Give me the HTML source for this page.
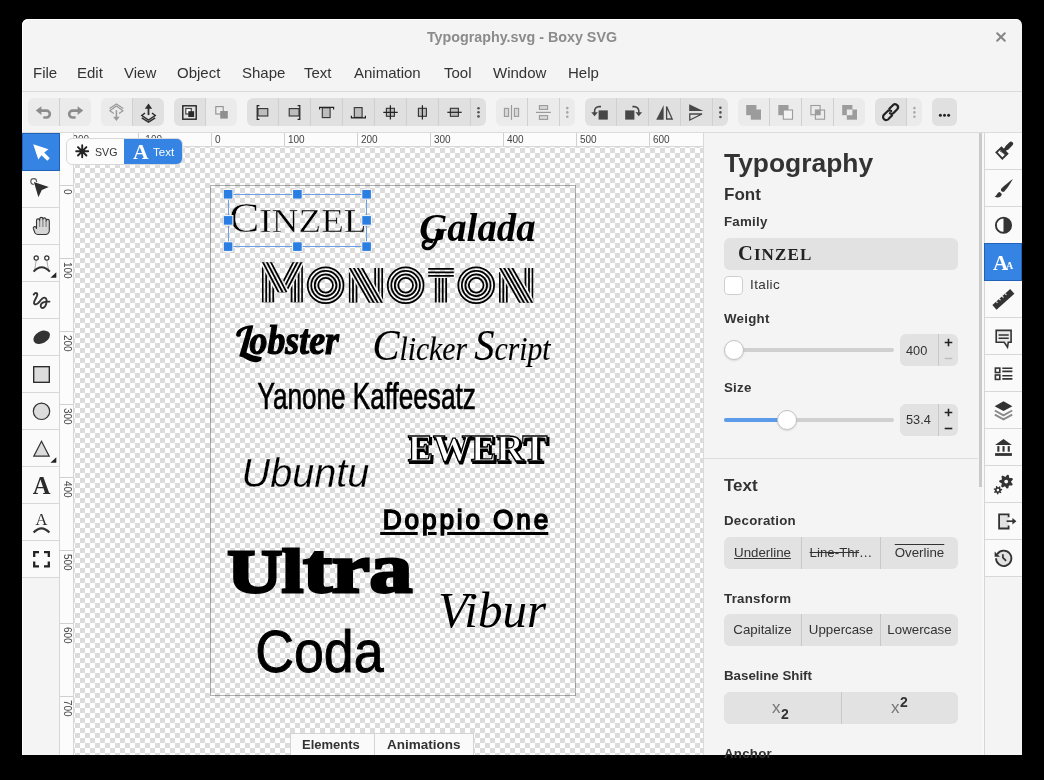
<!DOCTYPE html>
<html><head><meta charset="utf-8">
<style>
*{box-sizing:border-box}
html,body{margin:0;padding:0}
body{width:1044px;height:780px;background:#000;overflow:hidden;position:relative;font-family:"Liberation Sans",sans-serif;color:#333}
.a{position:absolute}
#win{left:22px;top:19px;width:1000px;height:736px;background:#f4f4f4;border-radius:6px 6px 0 0;overflow:hidden;box-shadow:inset 1px 1px 0 #fff}
.menu{top:63px;font-size:15px;color:#333;line-height:20px}
.grp{top:98px;height:28px;background:#ebebeb;border-radius:6px;overflow:hidden}
.btn{position:absolute;top:0;height:28px;border-right:1px solid #d4d4d4}
.btn svg{position:absolute;left:50%;top:50%;transform:translate(-50%,-50%)}
.pressed{background:#dedede}
.tool{left:22px;width:38px;height:37px;background:#fafafa;border-bottom:1px solid #d6d6d6;border-right:1px solid #d4d4d4}
.tool svg,.side svg{position:absolute;left:50%;top:50%;transform:translate(-50%,-50%)}
.side{left:984px;width:38px;height:37px;background:#fafafa;border-bottom:1px solid #d6d6d6;border-left:1px solid #d4d4d4}
.rl{font-size:10px;color:#444;line-height:10px}
.lbl{left:724px;font-weight:bold;font-size:13.3px;color:#333;line-height:16px;letter-spacing:.25px}
.seg{position:absolute;height:32px;background:#e2e2e2;border-radius:6px;overflow:hidden;left:724px;width:234px}
.seg div{position:absolute;top:0;height:32px;line-height:32px;text-align:center;font-size:13.3px;color:#333;border-right:1px solid #c8c8c8}
</style></head><body><div id="root" style="position:absolute;left:0;top:0;width:1044px;height:780px;will-change:transform">
<div id="win" class="a"></div>
<!-- title -->
<div class="a" style="left:22px;top:28px;width:1000px;text-align:center;font-weight:bold;font-size:14.3px;color:#8b8b8b;line-height:18px">Typography.svg - Boxy SVG</div>
<svg class="a" style="left:995px;top:31px" width="12" height="12" viewBox="0 0 12 12"><path d="M2.2 2.2L9.8 9.8M9.8 2.2L2.2 9.8" stroke="#858585" stroke-width="2" stroke-linecap="round"/></svg>
<!-- menu -->
<div class="a menu" style="left:33px">File</div>
<div class="a menu" style="left:77px">Edit</div>
<div class="a menu" style="left:124px">View</div>
<div class="a menu" style="left:177px">Object</div>
<div class="a menu" style="left:242px">Shape</div>
<div class="a menu" style="left:304px">Text</div>
<div class="a menu" style="left:354px">Animation</div>
<div class="a menu" style="left:444px">Tool</div>
<div class="a menu" style="left:493px">Window</div>
<div class="a menu" style="left:568px">Help</div>
<div class="a" style="left:22px;top:91px;width:1000px;height:1px;background:#dadada"></div>

<!-- TOOLBAR -->
<!-- group backgrounds -->
<div class="a" style="left:28px;top:98px;width:63px;height:28px;border-radius:6px;background:#ebebeb"></div>
<div class="a" style="left:101px;top:98px;width:63px;height:28px;border-radius:6px;background:linear-gradient(90deg,#ebebeb 31px,#e0e0e0 31px)"></div>
<div class="a" style="left:174px;top:98px;width:63px;height:28px;border-radius:6px;background:linear-gradient(90deg,#e0e0e0 31px,#ebebeb 31px)"></div>
<div class="a" style="left:247px;top:98px;width:239px;height:28px;border-radius:6px;background:#e0e0e0"></div>
<div class="a" style="left:496px;top:98px;width:79px;height:28px;border-radius:6px;background:#ebebeb"></div>
<div class="a" style="left:585px;top:98px;width:143px;height:28px;border-radius:6px;background:#e0e0e0"></div>
<div class="a" style="left:738px;top:98px;width:127px;height:28px;border-radius:6px;background:#ebebeb"></div>
<div class="a" style="left:875px;top:98px;width:47px;height:28px;border-radius:6px;background:linear-gradient(90deg,#e0e0e0 32px,#ebebeb 32px)"></div>
<div class="a" style="left:932px;top:98px;width:25px;height:28px;border-radius:6px;background:#e0e0e0"></div>
<!-- dividers -->
<svg class="a" style="left:0;top:0" width="1044" height="140">
<g fill="#d0d0d0">
<rect x="59" y="98" width="1" height="28"/>
<rect x="132" y="98" width="1" height="28"/>
<rect x="205" y="98" width="1" height="28"/>
<rect x="278" y="98" width="1" height="28"/><rect x="310" y="98" width="1" height="28"/><rect x="342" y="98" width="1" height="28"/><rect x="374" y="98" width="1" height="28"/><rect x="406" y="98" width="1" height="28"/><rect x="438" y="98" width="1" height="28"/><rect x="470" y="98" width="1" height="28"/>
<rect x="527" y="98" width="1" height="28"/><rect x="559" y="98" width="1" height="28"/>
<rect x="616" y="98" width="1" height="28"/><rect x="648" y="98" width="1" height="28"/><rect x="680" y="98" width="1" height="28"/><rect x="712" y="98" width="1" height="28"/>
<rect x="769" y="98" width="1" height="28"/><rect x="801" y="98" width="1" height="28"/><rect x="833" y="98" width="1" height="28"/>
<rect x="906" y="98" width="1" height="28"/>
</g>
<!-- undo/redo -->
<g fill="none" stroke="#8c8c8c" stroke-width="2.6" stroke-linecap="round">
<path d="M41 110.6H46.4A3.45 3.45 0 0 1 46.4 117.5H44.4"/>
<path d="M78 110.6H72.6A3.45 3.45 0 0 0 72.6 117.5H74.6"/>
</g>
<g fill="#8c8c8c"><path d="M35.8 110.6L41.4 106.2V115Z"/><path d="M83.2 110.6L77.6 106.2V115Z"/></g>
<!-- group2 icon1: grey chevrons + down arrow -->
<g fill="none" stroke="#9a9a9a" stroke-width="1.25" stroke-linejoin="round">
<path d="M109.6 108.6L116.4 103.9L123.2 108.6"/>
<path d="M113.8 113.5L109.8 110.8L116.4 106.1L123 110.8L119 113.5"/>
</g>
<path d="M116.4 110.2V117.5" stroke="#9a9a9a" stroke-width="1.5"/>
<path d="M113.1 116.8H119.7L116.4 121.1Z" fill="#9a9a9a"/>
<!-- group2 icon2: up arrow + stack -->
<g fill="none" stroke="#2e2e2e" stroke-width="1.5">
<path d="M145 113L141.8 115.5L148.5 120.2L155.2 115.5L152 113"/>
<path d="M141.8 117.8L148.5 122.2L155.2 117.8"/>
</g>
<path d="M148.5 107.5V115" stroke="#2e2e2e" stroke-width="1.8"/>
<path d="M144.8 108.8L148.5 103.6L152.2 108.8Z" fill="#2e2e2e"/>
<!-- group3 icon1 -->
<rect x="182.8" y="105.8" width="13.4" height="13.4" fill="none" stroke="#222" stroke-width="1.4"/>
<rect x="185.8" y="108.5" width="5.5" height="5.5" fill="#fff" stroke="#444" stroke-width="1.2"/>
<rect x="188.3" y="111.2" width="5.8" height="5.8" fill="#2a2a2a"/>
<!-- group3 icon2 -->
<rect x="215.8" y="106.6" width="7.4" height="7.4" fill="#ededed" stroke="#8f8f8f" stroke-width="1.1"/>
<rect x="220.2" y="111" width="7.6" height="7.6" fill="#8f8f8f"/>
<!-- align icons -->
<g fill="#bdbdbd" stroke="#333" stroke-width="1.1">
<rect x="258" y="108.6" width="9.8" height="7.4"/>
<rect x="289.2" y="108.6" width="9.8" height="7.4"/>
<rect x="322.3" y="107.8" width="7.8" height="9.8"/>
<rect x="354.3" y="107.6" width="7.8" height="9.8"/>
<rect x="386.4" y="108.3" width="8" height="8"/>
<rect x="418.4" y="108.3" width="8" height="8"/>
<rect x="450.4" y="108.3" width="8" height="8"/>
</g>
<g fill="none" stroke="#222" stroke-width="1.2">
<path d="M259.4 105.6H257.2V119.4H259.4"/>
<path d="M297.6 105.6H299.8V119.4H297.6"/>
<path d="M319.6 109.4V107.3H333.6V109.4"/>
<path d="M351.4 115.8V117.9H365.4V115.8"/>
<path d="M383.3 112.3H397.7M390.4 105.3V119.5"/>
<path d="M422.4 105.3V119.5"/>
<path d="M447.3 112.3H461.7"/>
</g>
<g fill="#555"><circle cx="478.5" cy="108.2" r="1.3"/><circle cx="478.5" cy="112.3" r="1.3"/><circle cx="478.5" cy="116.4" r="1.3"/></g>
<!-- distribute -->
<g fill="#d8d8d8" stroke="#9a9a9a" stroke-width="1.1">
<rect x="504.4" y="108.4" width="4.2" height="8"/>
<rect x="514.4" y="108.4" width="4.2" height="8"/>
<rect x="539.4" y="105.6" width="8.2" height="3.8"/>
<rect x="539.4" y="115.6" width="8.2" height="3.8"/>
</g>
<g stroke="#9a9a9a" stroke-width="1.2"><path d="M511.5 105V119.8"/><path d="M536 112.4H550.8"/></g>
<g fill="#a6a6a6"><circle cx="567.3" cy="108.1" r="1.3"/><circle cx="567.3" cy="112.4" r="1.3"/><circle cx="567.3" cy="116.7" r="1.3"/></g>
<!-- rotate / flip -->
<g fill="#474747">
<rect x="598.6" y="110.4" width="9.2" height="9.2"/>
<rect x="625.2" y="110.4" width="9.2" height="9.2"/>
<path d="M591.3 112.3H597.9L594.6 116.2Z"/>
<path d="M635.5 112.3H642.1L638.8 116.2Z"/>
<path d="M663.6 105.3V119.7H656.2Z"/>
<path d="M689.2 104.3L703.3 110.9H689.2Z"/>
</g>
<g fill="none" stroke="#474747" stroke-width="1.6">
<path d="M601 106.6H599A4.4 4.4 0 0 0 594.6 111V113"/>
<path d="M632.4 106.6H634.4A4.4 4.4 0 0 1 638.8 111V113"/>
<path d="M666.6 106.5V119H672.2Z" stroke-width="1.3" stroke-linejoin="miter"/>
<path d="M689.8 114V120L702 114Z" stroke-width="1.3"/>
</g>
<g fill="#505050"><circle cx="720.4" cy="107.8" r="1.3"/><circle cx="720.4" cy="112.4" r="1.3"/><circle cx="720.4" cy="117" r="1.3"/></g>
<!-- boolean -->
<g fill="#9c9c9c">
<rect x="746.2" y="105" width="10.2" height="10.2"/><rect x="750.8" y="109.5" width="10.2" height="10.2"/>
<rect x="778.3" y="105" width="10.2" height="10.2"/>
<rect x="842.2" y="105" width="10.2" height="10.2"/><rect x="846.8" y="109.5" width="10.2" height="10.2"/>
</g>
<rect x="783.3" y="110" width="9.2" height="9.2" fill="#f4f4f4" stroke="#9c9c9c" stroke-width="1.1"/>
<g fill="none" stroke="#9c9c9c" stroke-width="1.1">
<rect x="810.9" y="105.5" width="9.2" height="9.2"/><rect x="815.4" y="110" width="9.2" height="9.2"/>
</g>
<rect x="815.4" y="110" width="4.7" height="4.7" fill="#9c9c9c"/>
<rect x="846.8" y="109.5" width="5.6" height="5.7" fill="#ebebeb"/>
<!-- link -->
<g fill="none" stroke="#222" stroke-width="2.2" stroke-linecap="round">
<path d="M889.3 108.8L892.6 105.5A2.6 2.6 0 0 1 897.4 109.1L893.6 112.9A2.6 2.6 0 0 1 889.9 113.2"/>
<path d="M892 115.5L888.7 118.8A2.6 2.6 0 0 1 883.7 115L887.5 111.2A2.6 2.6 0 0 1 891.2 111"/>
</g>
<g fill="#aaa"><circle cx="914.4" cy="108.1" r="1.3"/><circle cx="914.4" cy="112.4" r="1.3"/><circle cx="914.4" cy="116.7" r="1.3"/></g>
<g fill="#222"><circle cx="940.4" cy="115.3" r="1.5"/><circle cx="944.5" cy="115.3" r="1.5"/><circle cx="948.6" cy="115.3" r="1.5"/></g>
</svg>


<!-- top line above rulers -->
<div class="a" style="left:22px;top:132px;width:1000px;height:1px;background:#dcdcdc"></div>

<!-- CANVAS -->
<div class="a" style="left:74px;top:147px;width:630px;height:608px;background-color:#fff;background-image:linear-gradient(45deg,#dcdcdc 25%,transparent 25%,transparent 75%,#dcdcdc 75%),linear-gradient(45deg,#dcdcdc 25%,transparent 25%,transparent 75%,#dcdcdc 75%);background-size:10px 10px;background-position:6px 6px,11px 11px"></div>

<!-- RULERS -->
<div class="a" style="left:60px;top:133px;width:643px;height:13px;background:#fcfcfc"></div>
<div class="a" style="left:60px;top:146px;width:643px;height:1px;background:#d8d8d8"></div>
<div class="a" style="left:60px;top:133px;width:13px;height:622px;background:#fcfcfc"></div>
<div class="a" style="left:73px;top:133px;width:1px;height:622px;background:#d8d8d8"></div>
<div class="a" style="left:703px;top:133px;width:1px;height:622px;background:#dadada"></div>
<svg class="a" style="left:0;top:0" width="1044" height="780"><g fill="#d0d0d0">
<rect x="138" y="133" width="1" height="13"/>
<rect x="211" y="133" width="1" height="13"/>
<rect x="284" y="133" width="1" height="13"/>
<rect x="357" y="133" width="1" height="13"/>
<rect x="430" y="133" width="1" height="13"/>
<rect x="503" y="133" width="1" height="13"/>
<rect x="576" y="133" width="1" height="13"/>
<rect x="649" y="133" width="1" height="13"/>
<rect x="60" y="185" width="13" height="1"/>
<rect x="60" y="258" width="13" height="1"/>
<rect x="60" y="331" width="13" height="1"/>
<rect x="60" y="404" width="13" height="1"/>
<rect x="60" y="477" width="13" height="1"/>
<rect x="60" y="550" width="13" height="1"/>
<rect x="60" y="623" width="13" height="1"/>
<rect x="60" y="696" width="13" height="1"/>
</g></svg>
<div class="a" style="left:74px;top:133px;width:629px;height:13px;overflow:hidden">
<div class="a rl" style="left:-5px;top:2px">-200</div>
<div class="a rl" style="left:68px;top:2px">-100</div>
<div class="a rl" style="left:141px;top:2px">0</div>
<div class="a rl" style="left:214px;top:2px">100</div>
<div class="a rl" style="left:287px;top:2px">200</div>
<div class="a rl" style="left:360px;top:2px">300</div>
<div class="a rl" style="left:433px;top:2px">400</div>
<div class="a rl" style="left:506px;top:2px">500</div>
<div class="a rl" style="left:579px;top:2px">600</div>
</div>
<div class="a" style="left:60px;top:147px;width:13px;height:608px;overflow:hidden">
<div class="a rl" style="left:12px;top:42px;transform-origin:0 0;transform:rotate(90deg)">0</div>
<div class="a rl" style="left:12px;top:115px;transform-origin:0 0;transform:rotate(90deg)">100</div>
<div class="a rl" style="left:12px;top:188px;transform-origin:0 0;transform:rotate(90deg)">200</div>
<div class="a rl" style="left:12px;top:261px;transform-origin:0 0;transform:rotate(90deg)">300</div>
<div class="a rl" style="left:12px;top:334px;transform-origin:0 0;transform:rotate(90deg)">400</div>
<div class="a rl" style="left:12px;top:407px;transform-origin:0 0;transform:rotate(90deg)">500</div>
<div class="a rl" style="left:12px;top:480px;transform-origin:0 0;transform:rotate(90deg)">600</div>
<div class="a rl" style="left:12px;top:553px;transform-origin:0 0;transform:rotate(90deg)">700</div>
</div>

<!-- LEFT TOOLS -->
<div class="a" style="left:22px;top:133px;width:37px;height:444px;background:#fafafa"></div>
<div class="a" style="left:59px;top:133px;width:1px;height:622px;background:#d6d6d6"></div>
<svg class="a" style="left:0;top:0" width="1044" height="780">
<g fill="#d8d8d8">
<rect x="22" y="207" width="37" height="1"/><rect x="22" y="244" width="37" height="1"/><rect x="22" y="281" width="37" height="1"/><rect x="22" y="318" width="37" height="1"/><rect x="22" y="355" width="37" height="1"/><rect x="22" y="392" width="37" height="1"/><rect x="22" y="429" width="37" height="1"/><rect x="22" y="466" width="37" height="1"/><rect x="22" y="503" width="37" height="1"/><rect x="22" y="540" width="37" height="1"/><rect x="22" y="577" width="37" height="1"/>
</g>
<rect x="22.5" y="133.5" width="37" height="37" fill="#3584e4" stroke="#1f62b8" stroke-width="1"/>
<path d="M33.2 144.2L48.5 149.3L44.2 152.5L49.8 158.3L47.3 160.8L41.5 155.2L38.3 159.5Z" fill="#fff"/>
<!-- node -->
<circle cx="33.7" cy="181.5" r="2.9" fill="none" stroke="#5a5a5a" stroke-width="1.15"/>
<path d="M33.9 182L48.8 186.9L41.8 190L38.4 197.3Z" fill="#2e2e2e" stroke="#fafafa" stroke-width="1.6" paint-order="stroke"/>
<!-- hand -->
<path d="M36.5 224.5V220.5A1.6 1.6 0 0 1 39.7 220.5V219A1.6 1.6 0 0 1 42.9 219V219.5A1.6 1.6 0 0 1 46.1 219.5V221A1.6 1.6 0 0 1 49.3 221V230.5A4 4 0 0 1 45.3 234.5H38A4 4 0 0 1 35 233L33.3 228.5A1.5 1.5 0 0 1 36 227.3L36.5 228.5Z" fill="#d6d6d6" stroke="#333" stroke-width="1.1" stroke-linejoin="round"/>
<path d="M39.7 221V227M42.9 220V227M46.1 221V227" stroke="#666" stroke-width="0.9"/>
<!-- bezier -->
<g fill="none" stroke="#333">
<path d="M36.2 260.2L34.6 270.5M46.8 260.2L48.6 270.5" stroke-width="0.7" stroke="#888"/>
<circle cx="36.2" cy="258" r="2.1" stroke-width="1.2" fill="#fff"/>
<circle cx="46.8" cy="258" r="2.1" stroke-width="1.2" fill="#fff"/>
<path d="M33.6 271.6Q41.6 263 49.8 271.6" stroke-width="2.1"/>
<path d="M33.6 532.6Q41.5 524 49.4 532.6" stroke-width="2.2"/>
</g>
<path d="M56.3 272.3V277.8H50.4Z" fill="#222"/>
<path d="M56.3 457.2V462.8H50.4Z" fill="#222"/>
<!-- freehand -->
<path d="M33.7 294.6C34.5 292.6 37.2 292.2 37.3 294.6C37.4 296.8 33.6 300.6 34 303C34.4 305.2 37 304.8 39.5 301.6C41.5 299 43 297.4 44.6 297.6C47 297.9 47 301.5 46 304.5C45 307.5 43 308.6 41.6 307.8C40 306.8 40.6 303.8 42.6 302.6C44.4 301.6 47 301.6 49.5 301.6" fill="none" stroke="#333" stroke-width="1.9" stroke-linecap="round"/>
<!-- blob -->
<ellipse cx="41.7" cy="337.3" rx="8.9" ry="5.9" transform="rotate(-28 41.7 337.3)" fill="#333"/>
<!-- rect / circle / triangle -->
<rect x="33.7" y="366.7" width="15.6" height="15.6" fill="#dcdcdc" stroke="#222" stroke-width="1.3"/>
<circle cx="41.5" cy="411.3" r="8.2" fill="#dcdcdc" stroke="#333" stroke-width="1.2"/>
<path d="M41.5 441.2L49.2 456.2H33.8Z" fill="#dcdcdc" stroke="#333" stroke-width="1.2" stroke-linejoin="miter"/>
<!-- crop -->
<path d="M34.2 557V552.2H39M44 552.2H48.8V557M48.8 561.6V566.4H44M39 566.4H34.2V561.6" fill="none" stroke="#222" stroke-width="2.3"/>
</svg>
<div class="a" style="left:23px;top:474px;width:37px;text-align:center;font:bold 24.5px 'Liberation Serif',serif;color:#2b2b2b;line-height:24px">A</div>
<div class="a" style="left:23px;top:512px;width:37px;text-align:center;font:16.5px 'Liberation Serif',serif;color:#2b2b2b;line-height:16px">A</div>


<!-- DOCUMENT -->
<svg class="a" style="left:0;top:0" width="1044" height="780">
<defs>
<pattern id="chk" x="5" y="3" width="10" height="10" patternUnits="userSpaceOnUse"><rect width="10" height="10" fill="#fff"/><rect width="5" height="5" fill="#dcdcdc"/><rect x="5" y="5" width="5" height="5" fill="#dcdcdc"/></pattern>
<clipPath id="cM"><rect x="261.9" y="262.2" width="41" height="40.4"/></clipPath>
<clipPath id="cMd"><rect x="255" y="255" width="55" height="37.2"/></clipPath>
<clipPath id="cN0"><rect x="348.7" y="268" width="34.6" height="34.7"/></clipPath>
<clipPath id="cN150"><rect x="499" y="268" width="34.6" height="34.7"/></clipPath>
</defs>
<rect x="210.5" y="185.5" width="365" height="510" fill="none" stroke="rgba(0,0,0,0.3)" stroke-width="1"/>
<g fill="none"><g clip-path="url(#cM)"><path d="M267.95 262.00L267.95 302.60" stroke="#000" stroke-width="12.3"/><path d="M267.95 262.00L267.95 302.60" stroke="url(#chk)" stroke-width="8.8"/><path d="M267.95 262.00L267.95 302.60" stroke="#000" stroke-width="5.3"/><path d="M267.95 262.00L267.95 302.60" stroke="url(#chk)" stroke-width="1.7"/><path d="M296.85 262.00L296.85 302.60" stroke="#000" stroke-width="12.3"/><path d="M296.85 262.00L296.85 302.60" stroke="url(#chk)" stroke-width="8.8"/><path d="M296.85 262.00L296.85 302.60" stroke="#000" stroke-width="5.3"/><path d="M296.85 262.00L296.85 302.60" stroke="url(#chk)" stroke-width="1.7"/><g clip-path="url(#cMd)"><path d="M301.15 255.00L280.80 294.00" stroke="url(#chk)" stroke-width="12.3"/><path d="M301.15 255.00L280.80 294.00" stroke="#000" stroke-width="8.8"/><path d="M301.15 255.00L280.80 294.00" stroke="url(#chk)" stroke-width="5.3"/><path d="M301.15 255.00L280.80 294.00" stroke="#000" stroke-width="1.8"/><path d="M263.15 255.00L283.50 294.00" stroke="url(#chk)" stroke-width="12.3"/><path d="M263.15 255.00L283.50 294.00" stroke="#000" stroke-width="8.8"/><path d="M263.15 255.00L283.50 294.00" stroke="url(#chk)" stroke-width="5.3"/><path d="M263.15 255.00L283.50 294.00" stroke="#000" stroke-width="1.8"/></g></g><g clip-path="url(#cN0)"><path d="M353.00 268.00V302.70" stroke="#000" stroke-width="8.8"/><path d="M353.00 268.00V302.70" stroke="url(#chk)" stroke-width="5.3"/><path d="M353.00 268.00V302.70" stroke="#000" stroke-width="1.8"/><path d="M378.70 268.00V302.70" stroke="#000" stroke-width="8.8"/><path d="M378.70 268.00V302.70" stroke="url(#chk)" stroke-width="5.3"/><path d="M378.70 268.00V302.70" stroke="#000" stroke-width="1.8"/><path d="M352.47 262.00L378.76 308.00" stroke="url(#chk)" stroke-width="15.7"/><path d="M352.47 262.00L378.76 308.00" stroke="#000" stroke-width="12.3"/><path d="M352.47 262.00L378.76 308.00" stroke="url(#chk)" stroke-width="8.8"/><path d="M352.47 262.00L378.76 308.00" stroke="#000" stroke-width="5.3"/><path d="M352.47 262.00L378.76 308.00" stroke="url(#chk)" stroke-width="1.7"/></g><g clip-path="url(#cN150)"><path d="M503.30 268.00V302.70" stroke="#000" stroke-width="8.8"/><path d="M503.30 268.00V302.70" stroke="url(#chk)" stroke-width="5.3"/><path d="M503.30 268.00V302.70" stroke="#000" stroke-width="1.8"/><path d="M529.00 268.00V302.70" stroke="#000" stroke-width="8.8"/><path d="M529.00 268.00V302.70" stroke="url(#chk)" stroke-width="5.3"/><path d="M529.00 268.00V302.70" stroke="#000" stroke-width="1.8"/><path d="M502.77 262.00L529.06 308.00" stroke="url(#chk)" stroke-width="15.7"/><path d="M502.77 262.00L529.06 308.00" stroke="#000" stroke-width="12.3"/><path d="M502.77 262.00L529.06 308.00" stroke="url(#chk)" stroke-width="8.8"/><path d="M502.77 262.00L529.06 308.00" stroke="#000" stroke-width="5.3"/><path d="M502.77 262.00L529.06 308.00" stroke="url(#chk)" stroke-width="1.7"/></g><circle cx="325.6" cy="285.3" r="17.9" stroke="#000" stroke-width="1.8"/><circle cx="325.6" cy="285.3" r="14.35" stroke="#000" stroke-width="1.8"/><circle cx="325.6" cy="285.3" r="10.85" stroke="#000" stroke-width="1.8"/><circle cx="325.6" cy="285.3" r="7.35" stroke="#000" stroke-width="1.8"/><circle cx="405.65" cy="285.3" r="17.9" stroke="#000" stroke-width="1.8"/><circle cx="405.65" cy="285.3" r="14.35" stroke="#000" stroke-width="1.8"/><circle cx="405.65" cy="285.3" r="10.85" stroke="#000" stroke-width="1.8"/><circle cx="405.65" cy="285.3" r="7.35" stroke="#000" stroke-width="1.8"/><circle cx="476.2" cy="285.3" r="17.9" stroke="#000" stroke-width="1.8"/><circle cx="476.2" cy="285.3" r="14.35" stroke="#000" stroke-width="1.8"/><circle cx="476.2" cy="285.3" r="10.85" stroke="#000" stroke-width="1.8"/><circle cx="476.2" cy="285.3" r="7.35" stroke="#000" stroke-width="1.8"/><path d="M428.2 268.8H453.8M428.2 272.3H453.8M428.2 275.8H453.8M435.8 278.1V302.6M439.25 278.1V302.6M442.7 278.1V302.6M446.15 278.1V302.6" stroke="#000" stroke-width="1.8"/></g>
<text x="229" y="231.7" font-family="Liberation Serif" fill="#000" stroke="url(#chk)" stroke-width="0.5" textLength="137.5" lengthAdjust="spacingAndGlyphs"><tspan font-size="42.5">C</tspan><tspan font-size="34.5">INZEL</tspan></text>
<text x="419.2" y="241.4" font-family="Liberation Serif" font-weight="bold" font-style="italic" font-size="41" fill="#000" textLength="116.4" lengthAdjust="spacingAndGlyphs">Galada</text>
<path d="M438.6 230C437.4 238 434.6 246 430.4 248C426.4 250 422.6 247.4 423.2 244.2C423.8 240.8 428 240 431.4 241.6" fill="none" stroke="#000" stroke-width="3.2" stroke-linecap="round"/>
<path d="M236.2 335.5C235.5 331 241 326 251.5 325.2L253.4 325.6L246.4 352.4C250.4 354.6 256.2 356.6 261.8 357.2L261.2 360.2C256.4 364.4 249.2 361.4 243.2 357.6L239.2 356.2L247.4 328.4C243.2 329.6 240.2 332 240.8 335.6C239.8 337.2 237.2 337.4 236.2 335.5Z" fill="#000"/>
<text x="249.6" y="353.5" font-family="Liberation Serif" font-weight="bold" font-style="italic" font-size="42" fill="#000" stroke="#000" stroke-width="1.2" textLength="89.4" lengthAdjust="spacingAndGlyphs">obster</text>
<text x="372.5" y="360.2" font-family="Liberation Serif" font-style="italic" font-size="33" fill="#000" stroke="#000" stroke-width="0.15" textLength="178" lengthAdjust="spacingAndGlyphs"><tspan font-size="45">C</tspan>licker <tspan font-size="45">S</tspan>cript</text>
<text x="257.4" y="409.1" font-family="Liberation Sans" font-size="37" fill="#000" stroke="#000" stroke-width="0.7" textLength="218.4" lengthAdjust="spacingAndGlyphs">Yanone Kaffeesatz</text>
<text x="407.7" y="461" font-family="Liberation Serif" font-weight="bold" font-size="38" fill="#000" stroke="#000" stroke-width="2" textLength="140" lengthAdjust="spacingAndGlyphs" transform="translate(1.5,1.5)">EWERT</text>
<text x="407.7" y="461" font-family="Liberation Serif" font-weight="bold" font-size="38" fill="#fff" stroke="#000" stroke-width="1.3" textLength="140" lengthAdjust="spacingAndGlyphs">EWERT</text>
<text x="241.6" y="486.7" font-family="Liberation Sans" font-style="italic" font-size="40" fill="#000" stroke="url(#chk)" stroke-width="0.3" textLength="127.6" lengthAdjust="spacingAndGlyphs">Ubuntu</text>
<g transform="translate(382.3,529.7) scale(0.92,1)"><text x="0.6" y="-0.3" font-family="Liberation Sans" font-size="28.5" fill="#000" stroke="#000" stroke-width="1.6" textLength="179.8" lengthAdjust="spacing">Doppio One</text></g>
<path d="M380.2 533.5H417.7M428 533.5H436.6M447.2 533.5H548.3" stroke="#000" stroke-width="2.8"/>
<text x="227.4" y="591.8" font-family="Liberation Serif" font-weight="bold" font-size="62" fill="#000" stroke="#000" stroke-width="3" textLength="185" lengthAdjust="spacingAndGlyphs">Ul<tspan font-size="70">tra</tspan></text>
<text x="438" y="627.3" font-family="Liberation Serif" font-style="italic" font-size="50" fill="#000" textLength="108" lengthAdjust="spacingAndGlyphs">Vibur</text>
<text x="255.2" y="672" font-family="Liberation Sans" font-size="59" fill="#000" stroke="#000" stroke-width="0.9" textLength="128.4" lengthAdjust="spacingAndGlyphs">Coda</text><rect x="228.5" y="194.5" width="138" height="52" fill="none" stroke="#6a9fe6" stroke-width="1"/><rect x="222.70" y="188.90" width="10.8" height="10.8" fill="#fff" stroke="rgba(0,0,0,0.12)" stroke-width="0.8"/><rect x="223.80" y="190.00" width="8.6" height="8.6" fill="#2a7de1"/><rect x="222.70" y="215.00" width="10.8" height="10.8" fill="#fff" stroke="rgba(0,0,0,0.12)" stroke-width="0.8"/><rect x="223.80" y="216.10" width="8.6" height="8.6" fill="#2a7de1"/><rect x="222.70" y="241.20" width="10.8" height="10.8" fill="#fff" stroke="rgba(0,0,0,0.12)" stroke-width="0.8"/><rect x="223.80" y="242.30" width="8.6" height="8.6" fill="#2a7de1"/><rect x="292.00" y="188.90" width="10.8" height="10.8" fill="#fff" stroke="rgba(0,0,0,0.12)" stroke-width="0.8"/><rect x="293.10" y="190.00" width="8.6" height="8.6" fill="#2a7de1"/><rect x="292.00" y="241.20" width="10.8" height="10.8" fill="#fff" stroke="rgba(0,0,0,0.12)" stroke-width="0.8"/><rect x="293.10" y="242.30" width="8.6" height="8.6" fill="#2a7de1"/><rect x="361.20" y="188.90" width="10.8" height="10.8" fill="#fff" stroke="rgba(0,0,0,0.12)" stroke-width="0.8"/><rect x="362.30" y="190.00" width="8.6" height="8.6" fill="#2a7de1"/><rect x="361.20" y="215.00" width="10.8" height="10.8" fill="#fff" stroke="rgba(0,0,0,0.12)" stroke-width="0.8"/><rect x="362.30" y="216.10" width="8.6" height="8.6" fill="#2a7de1"/><rect x="361.20" y="241.20" width="10.8" height="10.8" fill="#fff" stroke="rgba(0,0,0,0.12)" stroke-width="0.8"/><rect x="362.30" y="242.30" width="8.6" height="8.6" fill="#2a7de1"/>
</svg>
<!-- PANEL -->
<div class="a" style="left:979px;top:133px;width:3px;height:354px;background:#cacaca"></div>
<div class="a" style="left:982px;top:133px;width:2px;height:622px;background:#f8f8f8"></div>
<div class="a" style="left:724px;top:148px;font-weight:bold;font-size:26.4px;line-height:30px;color:#333">Typography</div>
<div class="a" style="left:724px;top:185px;font-weight:bold;font-size:17px;line-height:20px;color:#333">Font</div>
<div class="a lbl" style="top:214px">Family</div>
<div class="a" style="left:724px;top:238px;width:234px;height:32px;border-radius:6px;background:#e2e2e2"></div>
<div class="a" style="left:738px;top:240px;font-family:'Liberation Serif',serif;font-weight:bold;color:#222;line-height:26px;white-space:nowrap;letter-spacing:1.1px"><span style="font-size:20.5px">C</span><span style="font-size:17px">INZEL</span></div>
<div class="a" style="left:724px;top:276px;width:19px;height:19px;border-radius:4px;background:#fff;border:1px solid #cfcfcf"></div>
<div class="a" style="left:750px;top:277px;font-size:13.5px;line-height:16px;color:#333;letter-spacing:.4px">Italic</div>
<div class="a lbl" style="top:310.5px">Weight</div>
<div class="a" style="left:724px;top:348px;width:170px;height:4px;border-radius:2px;background:#d0d0d0"></div>
<div class="a" style="left:724px;top:340px;width:20px;height:20px;border-radius:50%;background:#fff;border:1px solid #c2c2c2;box-shadow:0 1px 2px rgba(0,0,0,.12)"></div>
<div class="a" style="left:900px;top:334px;width:58px;height:32px;border-radius:6px;background:#e2e2e2"></div>
<div class="a" style="left:938px;top:334px;width:1px;height:32px;background:#c8c8c8"></div>
<div class="a" style="left:906px;top:343px;font-size:12.8px;line-height:15px;color:#333">400</div>
<div class="a lbl" style="top:380px">Size</div>
<div class="a" style="left:724px;top:418px;width:170px;height:4px;border-radius:2px;background:#d0d0d0"></div>
<div class="a" style="left:724px;top:418px;width:64px;height:4px;border-radius:2px;background:#5b9bea"></div>
<div class="a" style="left:777px;top:410px;width:20px;height:20px;border-radius:50%;background:#fff;border:1px solid #c2c2c2;box-shadow:0 1px 2px rgba(0,0,0,.12)"></div>
<div class="a" style="left:900px;top:404px;width:58px;height:32px;border-radius:6px;background:#e2e2e2"></div>
<div class="a" style="left:938px;top:404px;width:1px;height:32px;background:#c8c8c8"></div>
<div class="a" style="left:906px;top:412px;font-size:12.8px;line-height:15px;color:#333">53.4</div>
<svg class="a" style="left:0;top:0" width="1044" height="780">
<g stroke="#222" stroke-width="1.6"><path d="M944.7 342.5H952.3M948.5 338.7V346.3"/><path d="M944.7 412.5H952.3M948.5 408.7V416.3"/><path d="M944.7 428.5H952.3"/></g>
<path d="M944.7 358.5H952.3" stroke="#bdbdbd" stroke-width="1.4"/>
</svg>
<div class="a" style="left:704px;top:458px;width:274px;height:1px;background:#dcdcdc"></div>
<div class="a" style="left:724px;top:476px;font-weight:bold;font-size:17px;line-height:20px;color:#333">Text</div>
<div class="a lbl" style="top:513px">Decoration</div>
<div class="seg" style="top:537px"><div style="left:0;width:78px;text-decoration:underline">Underline</div><div style="left:78px;width:79px"><s>Line-Thr</s>…</div><div style="left:157px;width:77px;border:none;text-decoration:overline">Overline</div></div>
<div class="a lbl" style="top:591px">Transform</div>
<div class="seg" style="top:614px"><div style="left:0;width:78px">Capitalize</div><div style="left:78px;width:79px">Uppercase</div><div style="left:157px;width:77px;border:none">Lowercase</div></div>
<div class="a lbl" style="top:668px;letter-spacing:0">Baseline Shift</div>
<div class="seg" style="top:692px"><div style="left:0;width:118px"></div></div>
<div class="a" style="left:772px;top:698px;font-size:17px;line-height:20px;color:#777">x</div>
<div class="a" style="left:781px;top:706px;font-size:14px;font-weight:bold;line-height:16px;color:#333">2</div>
<div class="a" style="left:891px;top:698px;font-size:17px;line-height:20px;color:#777">x</div>
<div class="a" style="left:900px;top:694px;font-size:14px;font-weight:bold;line-height:16px;color:#333">2</div>
<div class="a lbl" style="top:746px">Anchor</div>
<!-- bottom tabs -->
<div class="a" style="left:290px;top:733px;width:184px;height:22px;background:#fafafa;border:1px solid #d4d4d4;border-bottom:none"></div>
<div class="a" style="left:374px;top:733px;width:1px;height:22px;background:#d4d4d4"></div>
<div class="a" style="left:302px;top:737px;font-weight:bold;font-size:13px;line-height:15px;color:#333">Elements</div>
<div class="a" style="left:387px;top:737px;font-weight:bold;font-size:13.5px;line-height:15px;color:#333">Animations</div>
<!-- pill -->
<div class="a" style="left:66px;top:138px;width:117px;height:27px;border-radius:6px;background:#fcfcfc;border:1px solid #d8d8d8;overflow:hidden"><div class="a" style="left:57px;top:-1px;width:60px;height:27px;background:#3584e4;border-radius:0 6px 6px 0"></div></div>
<svg class="a" style="left:0;top:0" width="200" height="180">
<g stroke="#222" stroke-width="1.9" stroke-linecap="round"><path d="M82.2 145.3V157.3M76.2 151.3H88.2M78 147.1L86.4 155.5M86.4 147.1L78 155.5"/></g>
</svg>
<div class="a" style="left:95px;top:144.5px;font-size:10.6px;line-height:14px;color:#333">SVG</div>
<div class="a" style="left:133px;top:141.5px;font-family:'Liberation Serif',serif;font-weight:bold;font-size:20px;line-height:20px;color:#fff;transform:scaleX(1.08);transform-origin:0 0">A</div>
<div class="a" style="left:153px;top:144.5px;font-size:11.5px;line-height:14px;color:#fff">Text</div>


<!-- SIDE STRIP -->
<div class="a" style="left:984px;top:133px;width:1px;height:622px;background:#d6d6d6"></div>
<div class="a" style="left:985px;top:133px;width:37px;height:443px;background:#fafafa"></div>
<svg class="a" style="left:0;top:0" width="1044" height="780">
<g fill="#d8d8d8">
<rect x="985" y="169" width="37" height="1"/><rect x="985" y="206" width="37" height="1"/><rect x="985" y="317" width="37" height="1"/><rect x="985" y="354" width="37" height="1"/><rect x="985" y="391" width="37" height="1"/><rect x="985" y="428" width="37" height="1"/><rect x="985" y="465" width="37" height="1"/><rect x="985" y="502" width="37" height="1"/><rect x="985" y="539" width="37" height="1"/><rect x="985" y="576" width="37" height="1"/>
</g>
<rect x="984.5" y="243.5" width="37" height="37" fill="#3584e4" stroke="#1f62b8" stroke-width="1"/>
<!-- paint bucket brush -->
<path d="M996.4 152.4L1001.5 147.5L1007.4 153.8L1002.3 158.6Z" fill="none" stroke="#333" stroke-width="1.9" stroke-linejoin="miter"/>
<path d="M1001.5 147.5L1007.4 153.8L1005.9 155.2L1004.9 153.9L1004.4 155.2L1002.8 152.6L1001.8 153.4L1001.6 151.4L1000 151.9L1000.6 149.8L999.6 148.9Z" fill="#333"/>
<path d="M1004.3 150.3L1010.3 144.3" stroke="#333" stroke-width="3.2" stroke-linecap="round"/>
<path d="M1007.2 147.6L1011 143.8" stroke="#333" stroke-width="4.4" stroke-linecap="round"/>
<!-- brush -->
<path d="M1012.8 179.1C1011 182.8 1007.2 188.6 1004.4 191.4C1003.4 192.4 1001.4 191.6 1001 190.6C1000.8 189.6 1001 188.8 1001.9 188C1004.6 185.4 1009.6 181.6 1012.8 179.1Z" fill="#333"/>
<path d="M999.8 191.9L1001.8 193.9C1001.6 196.6 998.6 198.4 994.6 196.8C997 195.6 996.8 192.4 999.8 191.9Z" fill="#333"/>
<!-- contrast -->
<circle cx="1003.5" cy="225.2" r="7.6" fill="none" stroke="#333" stroke-width="1.9"/>
<path d="M1003.5 217.6A7.6 7.6 0 0 1 1003.5 232.8Z" fill="#333"/>
<!-- ruler -->
<g transform="rotate(-42 1003.3 299.3)">
<rect x="991.3" y="296.3" width="24" height="6.2" fill="#333"/>
<g fill="#fafafa"><rect x="996" y="296.3" width="1.1" height="1.8"/><rect x="1000" y="296.3" width="1.1" height="1.8"/><rect x="1004" y="296.3" width="1.1" height="1.8"/><rect x="1008" y="296.3" width="1.1" height="1.8"/></g>
</g>
<!-- comment -->
<path d="M996.2 330.4H1011.1V342.2H1008.3L1007.5 347.2L1004.2 342.2H996.2Z" fill="#e8e8e8" stroke="#333" stroke-width="1.6" stroke-linejoin="miter"/>
<path d="M998.6 335H1008.7M998.6 338.2H1008.7" stroke="#333" stroke-width="1.5"/>
<!-- list -->
<g fill="none" stroke="#333" stroke-width="1.6">
<rect x="995.4" y="368.1" width="4.4" height="4.4"/><rect x="995.4" y="375" width="4.4" height="4.4"/>
<path d="M1002.3 368.3H1012.4M1002.3 371.4H1012.4M1002.3 375.8H1012.4M1002.3 378.9H1012.4"/>
</g>
<!-- layers -->
<path d="M994.6 406.2L1003.5 401.3L1012.4 406.2L1003.5 411.1Z" fill="#333"/>
<path d="M994.8 410.5L1003.5 415.3L1012.2 410.5" fill="none" stroke="#8a8a8a" stroke-width="1.9"/>
<path d="M994.8 414.6L1003.5 419.4L1012.2 414.6" fill="none" stroke="#8a8a8a" stroke-width="1.9"/>
<!-- library -->
<path d="M995.1 444.9L1003.5 439.1L1011.9 444.9Z" fill="#333"/>
<g fill="#333"><rect x="997.3" y="446.1" width="2.1" height="5.6"/><rect x="1002.5" y="446.1" width="2.1" height="5.6"/><rect x="1007.7" y="446.1" width="2.1" height="5.6"/><rect x="995.1" y="453.1" width="16.8" height="2.8"/></g>
<!-- gears -->
<path d="M1007.24 474.68 L1008.76 475.08 L1009.27 478.04 L1012.26 478.10 L1012.89 479.54 L1010.90 481.78 L1012.72 484.16 L1011.98 485.54 L1008.99 485.38 L1008.26 488.29 L1006.72 488.58 L1004.98 486.14 L1002.26 487.38 L1001.07 486.36 L1001.89 483.48 L999.22 482.12 L999.28 480.56 L1002.04 479.40 L1001.44 476.47 L1002.70 475.54 L1005.33 476.98Z" fill="#333"/><circle cx="1006.2" cy="481.6" r="1.9" fill="#fafafa"/><path d="M999.62 486.16 L1000.45 486.64 L1000.13 488.58 L1002.05 488.99 L1002.20 489.94 L1000.48 490.90 L1001.36 492.65 L1000.70 493.36 L998.89 492.61 L998.06 494.40 L997.10 494.33 L996.55 492.44 L994.64 492.90 L994.10 492.11 L995.23 490.50 L993.67 489.30 L993.96 488.38 L995.92 488.26 L995.89 486.30 L996.79 485.95 L998.10 487.41Z" fill="#333"/><circle cx="997.9" cy="490.1" r="1.3" fill="#fafafa"/>
<!-- export -->
<path d="M1008.6 517.2V514.4H999.1V528.5H1008.6V525.6" fill="#e2e2e2" stroke="#333" stroke-width="1.8"/>
<path d="M1006.6 521.2H1013" stroke="#333" stroke-width="1.7"/>
<path d="M1012.4 518L1016.4 521.2L1012.4 524.4Z" fill="#333"/>
<!-- history -->
<circle cx="1003.7" cy="558.3" r="7.7" fill="#e2e2e2" stroke="none"/>
<path d="M997.2 554.2A7.7 7.7 0 1 1 996 558.3" fill="none" stroke="#333" stroke-width="1.8"/>
<path d="M994.6 551.5L1000 556.8H994.6Z" fill="#333"/>
<path d="M1002.9 554.2V557.6L1006.1 560.9" fill="none" stroke="#333" stroke-width="1.7"/>
<!-- big A on blue -->
</svg>
<div class="a" style="left:993px;top:253px;font-family:'Liberation Serif',serif;font-weight:bold;font-size:21px;line-height:20px;color:#fff">A</div>
<div class="a" style="left:1006px;top:261px;font-family:'Liberation Serif',serif;font-weight:bold;font-size:10px;line-height:10px;color:#fff">A</div>


</div></body></html>
